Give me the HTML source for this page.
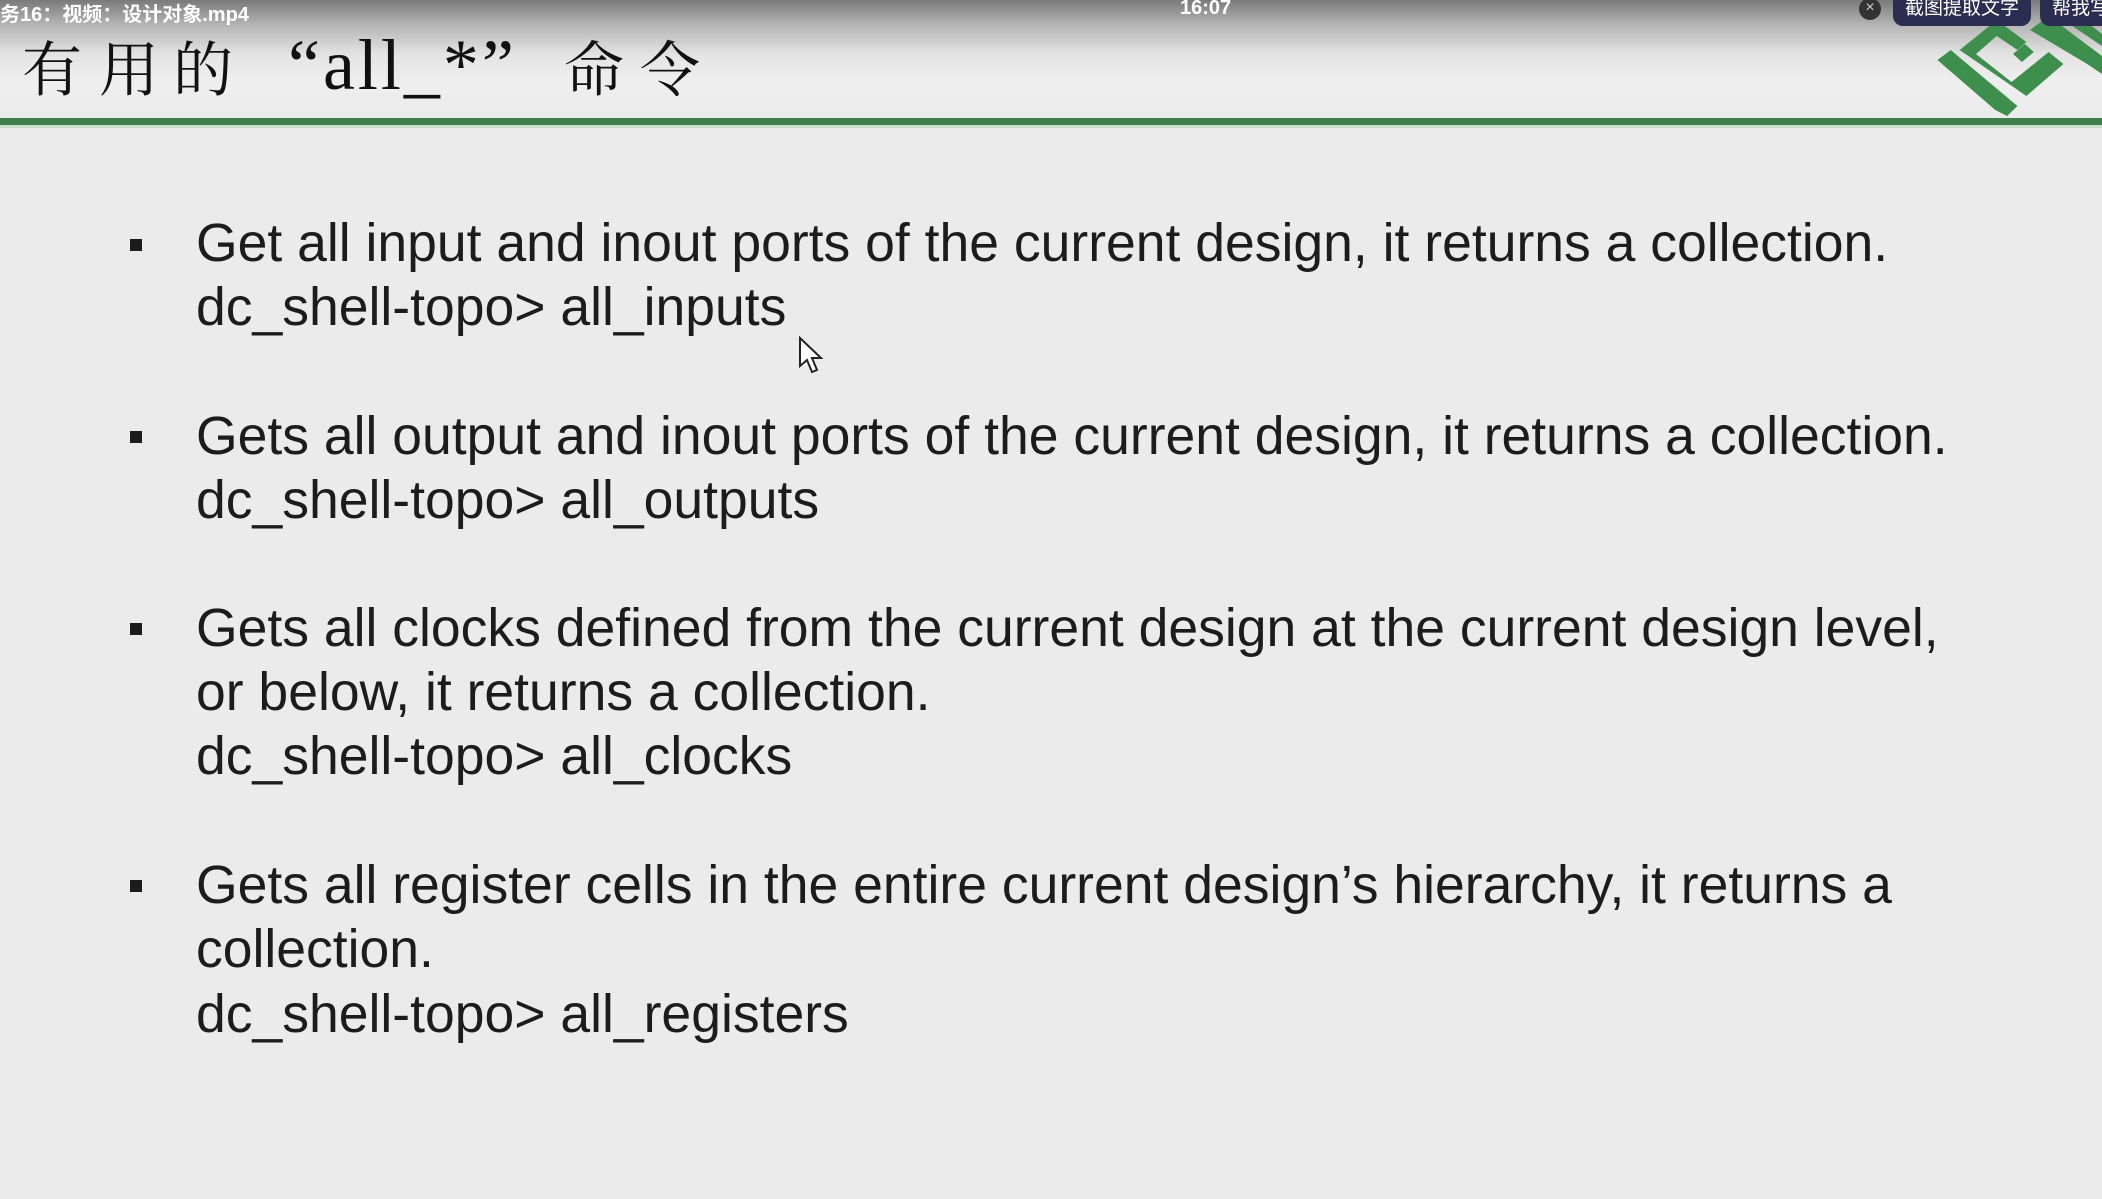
<!DOCTYPE html>
<html><head><meta charset="utf-8"><style>
body{margin:0;width:2102px;height:1199px;overflow:hidden;background:#ebebeb;position:relative;font-family:"Liberation Sans","Noto Sans CJK SC",sans-serif;}
.top{position:absolute;left:0;top:0;width:2102px;height:120px;background:linear-gradient(#7a7a7a 0px,#b5b5b5 25px,#e4e4e4 55px,#eeeeee 80px,#ececec 118px);}
.fn{position:absolute;left:0;top:-2px;color:#fff;font-weight:bold;font-size:20px;}
.time{position:absolute;left:1180px;top:-3px;color:#fff;font-weight:bold;font-size:20px;}
.c{position:absolute;top:26px;font-family:"Noto Serif CJK SC",serif;font-size:60px;line-height:80px;color:#111;}
.l{position:absolute;top:20px;font-family:"Liberation Serif",serif;font-size:72px;line-height:90px;color:#111;white-space:nowrap;letter-spacing:3px;}
.gl{position:absolute;left:0;top:118px;width:2102px;height:7px;background:#3f7f4c;}
.gl2{position:absolute;left:0;top:125px;width:2102px;height:3px;background:#c9dccc;}
.btn{position:absolute;top:-2px;height:28px;background:#2d2d52;color:#fff;font-size:19px;border-radius:0 0 10px 10px;line-height:22px;padding:0 12px;white-space:nowrap;}
.x{position:absolute;left:1859px;top:-2px;width:22px;height:22px;border-radius:50%;background:#333;color:#ccc;font-size:16px;text-align:center;line-height:20px;}
.t{position:absolute;left:196px;font-size:53.5px;color:#1c1c1c;line-height:64px;white-space:nowrap;}
.b{position:absolute;left:130px;width:12px;height:12px;background:#1c1c1c;}
</style></head><body>
<div class="top"></div>
<div class="fn">务16：视频：设计对象.mp4</div>
<div class="time">16:07</div>
<div class="c" style="left:22px">有</div>
<div class="c" style="left:99px">用</div>
<div class="c" style="left:173px">的</div>
<div class="l" style="left:288px">“all_*”</div>
<div class="c" style="left:564px">命</div>
<div class="c" style="left:640px">令</div>
<svg style="position:absolute;left:1930px;top:10px" width="172" height="110" viewBox="0 0 232 110" preserveAspectRatio="none">
<g fill="#3e8f4e">
<polygon points="10,50 88,100 104,106 118,96 44,50 28,40"/>
<polygon points="40,40 90,10 130,32 118,40 90,26 62,44 110,72 160,42 180,54 130,86"/>
<polygon points="112,44 128,34 140,42 124,52"/>
<polygon points="135,20 160,6 232,46 232,64 212,54"/>
<polygon points="160,0 190,0 232,24 232,36"/>
</g></svg>
<div class="x">×</div>
<div class="btn" style="left:1893px;">截图提取文字</div>
<div class="btn" style="left:2040px;">帮我写</div>
<div class="gl"></div><div class="gl2"></div>

<div class="b" style="top:239px"></div>
<div class="t" style="top:212px">Get all input and inout ports of the current design, it returns a collection.</div>
<div class="t" style="top:276px">dc_shell-topo&gt; all_inputs</div>

<div class="b" style="top:431px"></div>
<div class="t" style="top:405px">Gets all output and inout ports of the current design, it returns a collection.</div>
<div class="t" style="top:469px">dc_shell-topo&gt; all_outputs</div>

<div class="b" style="top:623px"></div>
<div class="t" style="top:597px">Gets all clocks defined from the current design at the current design level,</div>
<div class="t" style="top:661px">or below, it returns a collection.</div>
<div class="t" style="top:725px">dc_shell-topo&gt; all_clocks</div>

<div class="b" style="top:880px"></div>
<div class="t" style="top:854px">Gets all register cells in the entire current design’s hierarchy, it returns a</div>
<div class="t" style="top:918px">collection.</div>
<div class="t" style="top:983px">dc_shell-topo&gt; all_registers</div>

<svg style="position:absolute;left:798px;top:336px" width="28" height="40" viewBox="0 0 28 40"><path d="M2,2 L2,30 L9,24 L14,36 L19,34 L14,22 L23,22 Z" fill="#fff" stroke="#222" stroke-width="2"/></svg>
</body></html>
